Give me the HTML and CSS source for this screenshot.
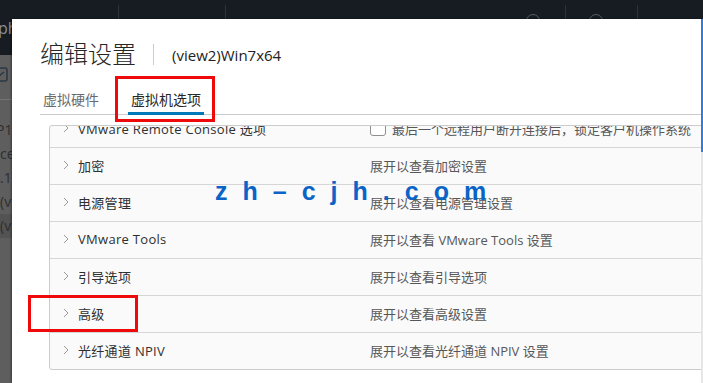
FILE: index.html
```html
<!DOCTYPE html>
<html lang="zh-CN">
<head>
    <meta charset="UTF-8">
    <title>编辑设置</title>
    <link rel="stylesheet" href="styles.css">
</head>
<body>
<div class="page">
    <header class="topbar">
        <div class="seg seg-brand"><span class="brand">ph</span></div>
        <div class="seg seg-menu"></div>
        <div class="seg seg-search"><span class="ring"></span></div>
        <div class="seg seg-user"><span class="ring"></span></div>
        <div class="seg"></div>
    </header>
    <aside class="side">
        <div class="side-tool">
            <svg width="10" height="20" viewBox="0 0 10 20">
                <rect x="-6" y="3" width="13" height="13" rx="2" fill="none" stroke="#2c3945" stroke-width="1.6"/>
                <path d="M-2 12 L4 7" stroke="#2c3945" stroke-width="1.6"/>
            </svg>
        </div>
        <ul class="side-list">
            <li class="cut">P1.</li>
            <li>ce</li>
            <li>.11</li>
            <li>(v</li>
            <li class="sel">(v</li>
        </ul>
    </aside>
</div>

<div class="modal">
    <div class="modal-head">
        <h1 class="title">编辑设置</h1>
        <span class="divider"></span>
        <span class="vm-name">(view2)Win7x64</span>
    </div>

    <nav class="tabs">
        <a class="tab">虚拟硬件</a>
        <a class="tab active">虚拟机选项</a>
    </nav>

    <div class="grid">
        <div class="row first">
            <div class="cell-name"><svg class="chev" width="6" height="10" viewBox="0 0 6 10"><polyline points="1,1 5,5 1,9" fill="none" stroke="#9a9a9a" stroke-width="1"/></svg>VMware Remote Console 选项</div>
            <div class="cell-value"><span class="check"></span>最后一个远程用户断开连接后，锁定客户机操作系统</div>
        </div>
        <div class="row">
            <div class="cell-name"><svg class="chev" width="6" height="10" viewBox="0 0 6 10"><polyline points="1,1 5,5 1,9" fill="none" stroke="#9a9a9a" stroke-width="1"/></svg>加密</div>
            <div class="cell-value">展开以查看加密设置</div>
        </div>
        <div class="row">
            <div class="cell-name"><svg class="chev" width="6" height="10" viewBox="0 0 6 10"><polyline points="1,1 5,5 1,9" fill="none" stroke="#9a9a9a" stroke-width="1"/></svg>电源管理</div>
            <div class="cell-value">展开以查看电源管理设置</div>
        </div>
        <div class="row">
            <div class="cell-name"><svg class="chev" width="6" height="10" viewBox="0 0 6 10"><polyline points="1,1 5,5 1,9" fill="none" stroke="#9a9a9a" stroke-width="1"/></svg>VMware Tools</div>
            <div class="cell-value">展开以查看 VMware Tools 设置</div>
        </div>
        <div class="row">
            <div class="cell-name"><svg class="chev" width="6" height="10" viewBox="0 0 6 10"><polyline points="1,1 5,5 1,9" fill="none" stroke="#9a9a9a" stroke-width="1"/></svg>引导选项</div>
            <div class="cell-value">展开以查看引导选项</div>
        </div>
        <div class="row">
            <div class="cell-name"><svg class="chev" width="6" height="10" viewBox="0 0 6 10"><polyline points="1,1 5,5 1,9" fill="none" stroke="#9a9a9a" stroke-width="1"/></svg>高级</div>
            <div class="cell-value">展开以查看高级设置</div>
        </div>
        <div class="row">
            <div class="cell-name"><svg class="chev" width="6" height="10" viewBox="0 0 6 10"><polyline points="1,1 5,5 1,9" fill="none" stroke="#9a9a9a" stroke-width="1"/></svg>光纤通道 NPIV</div>
            <div class="cell-value">展开以查看光纤通道 NPIV 设置</div>
        </div>
    </div>

    <!-- 水印 & 标注框 -->
    <div class="watermark">zh–cjh.com</div>
    <div class="mark mark-tab"></div>
    <div class="mark mark-adv"></div>
    <div class="scrollbar"><div class="thumb"></div></div>
</div>
</body>
</html>
```

FILE: styles.css
```css
:root {
    --dark: #171c22;
    --backdrop: #5e5e5e;
    --text: #2f2f2f;
    --muted: #575757;
    --border: #d6d6d6;
    --blue: #0079b8;
    --red: #ee0a0a;
}

* {
    margin: 0;
    padding: 0;
    box-sizing: border-box;
}

body {
    font-family: "Open Sans", "Noto Sans CJK SC", sans-serif;
    width: 703px;
    height: 383px;
    overflow: hidden;
    position: relative;
    background-color: var(--backdrop);
    color: var(--text);
}

/* ===== 背景页面（被遮罩） ===== */
.topbar {
    display: flex;
    height: 55px;
    background-color: var(--dark);
}

.seg {
    border-left: 1px solid #2c333b;
    margin-top: 5px;
    display: flex;
    align-items: flex-start;
}

.seg-brand {
    width: 118px;
    border-left: none;
}

.brand {
    color: #8a8f95;
    font-size: 16px;
    margin-left: -2px;
    margin-top: 12px;
}

.seg-menu {
    width: 107px;
}

.seg-search {
    width: 340px;
    justify-content: flex-end;
    padding-right: 25px;
}

.seg-user {
    width: 72px;
    padding-left: 23px;
}

.seg:last-child {
    flex: 1;
}

.ring {
    width: 14px;
    height: 14px;
    margin-top: 9px;
    border: 1.5px solid #565c63;
    border-radius: 50%;
}

.side-tool {
    height: 45px;
    padding-top: 10px;
    border-bottom: 1px solid #747474;
}

.side-list {
    list-style: none;
    padding-top: 18px;
}

.side-list li {
    height: 24px;
    line-height: 24px;
    font-size: 14px;
    color: #2e2e2e;
    white-space: nowrap;
}

.side-list .cut {
    margin-left: -4px;
}

.side-list .sel {
    background-color: #535353;
}

/* ===== 编辑设置 对话框 ===== */
.modal {
    position: absolute;
    left: 12px;
    top: 19px;
    right: 0;
    bottom: 0;
    background-color: white;
    padding: 21px 0 0 28px;
    overflow: hidden;
    box-shadow: -1px 0 2px rgba(0, 0, 0, 0.35);
}

.modal-head {
    display: flex;
    align-items: center;
    height: 28px;
}

.title {
    font-size: 24px;
    line-height: 28px;
    font-weight: 300;
    color: #262626;
}

.divider {
    width: 1px;
    height: 21px;
    background-color: #cccccc;
    margin: 0 18px 0 17px;
}

.vm-name {
    font-size: 15px;
    color: #222;
    padding-top: 1px;
}

.tabs {
    display: flex;
    margin-top: 16px;
    border-bottom: 1px solid #cccccc;
}

.tab {
    font-size: 14px;
    line-height: 22px;
    padding: 5px 3px 1px;
    margin-right: 26px;
    margin-bottom: -1px;
    border-bottom: 3px solid transparent;
    color: #6a6a6a;
}

.tab.active {
    color: #262626;
    border-bottom-color: var(--blue);
}

.grid {
    margin: 10px 0 0 9px;
    width: 720px;
    border: 1px solid #cccccc;
    border-radius: 3px;
    background-color: #fafafa;
    overflow: hidden;
}

.row {
    display: flex;
    align-items: center;
    height: 37px;
    padding-bottom: 2px;
    border-bottom: 1px solid var(--border);
    font-size: 13px;
    white-space: nowrap;
}

.row.first {
    margin-top: -15px;
}

.row:last-child {
    height: 36px;
    border-bottom: none;
}

.cell-name {
    display: flex;
    align-items: center;
    width: 320px;
    padding-left: 13px;
    letter-spacing: 0.3px;
    color: var(--text);
}

.chev {
    margin-right: 9px;
}

.cell-value {
    display: flex;
    align-items: center;
    color: var(--muted);
}

.check {
    width: 16px;
    height: 16px;
    border: 1px solid #8f8f8f;
    border-radius: 3px;
    background-color: white;
    margin-right: 6px;
}

.watermark {
    position: absolute;
    left: 203px;
    top: 160px;
    font-family: "Liberation Sans", sans-serif;
    font-weight: bold;
    font-size: 25px;
    line-height: 25px;
    letter-spacing: 15px;
    color: #0a64c8;
}

.mark {
    position: absolute;
    border: 3px solid var(--red);
}

.mark-tab {
    left: 103px;
    top: 57px;
    width: 100px;
    height: 46px;
}

.mark-adv {
    left: 16px;
    top: 276px;
    width: 110px;
    height: 37px;
}

.scrollbar {
    position: absolute;
    right: 0;
    top: 0;
    bottom: 0;
    width: 2px;
    background-color: #e6e6e6;
}

.thumb {
    height: 133px;
    background-color: #2b7fe0;
}
```
